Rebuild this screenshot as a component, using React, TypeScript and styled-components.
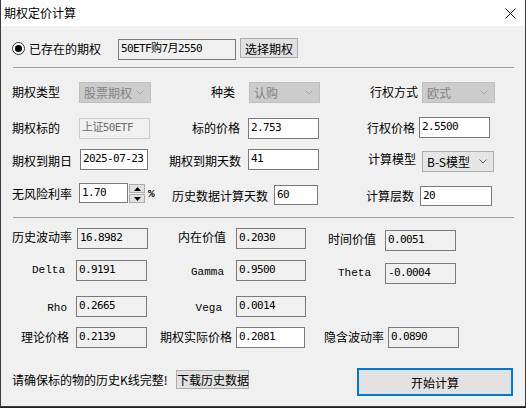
import React from 'react'
import styled, { createGlobalStyle } from 'styled-components'

const GlobalStyle = createGlobalStyle`
  html, body {
    margin: 0;
    padding: 0;
    background: #202020;
  }
  body {
    font-family: "Noto Sans CJK SC", "Noto Sans", sans-serif;
    font-size: 12px;
    color: #000;
  }
`

const Window = styled.div`
  width: 524px;
  height: 406px;
  background: #f0f0f0;
  border: 1px solid #3c3c3c;
  border-top: none;
  overflow: hidden;
`

const TitleBar = styled.div`
  height: 26px;
  background: #ffffff;
  display: flex;
  align-items: center;
  justify-content: space-between;
  padding: 0 9px 0 3px;
`

const Title = styled.span`
  font-size: 12px;
  line-height: 26px;
`

const Body = styled.div`
  padding-left: 11px;
`

const Row = styled.div<{ $mt: number; $h: number }>`
  display: flex;
  align-items: flex-start;
  margin-top: ${p => p.$mt}px;
  height: ${p => p.$h}px;
`

const Label = styled.span<{ $w: number; $right?: boolean; $pr?: number; $dy?: number; $h?: number; $latin?: boolean }>`
  width: ${p => p.$w}px;
  flex: none;
  box-sizing: border-box;
  text-align: ${p => (p.$right ? 'right' : 'left')};
  padding-right: ${p => p.$pr ?? 0}px;
  margin-top: ${p => p.$dy ?? 0}px;
  line-height: ${p => p.$h ?? 20}px;
  white-space: nowrap;
  font-family: ${p => (p.$latin ? '"Liberation Mono", monospace' : '"Noto Sans CJK SC", sans-serif')};
  font-size: ${p => (p.$latin ? '11px' : '12px')};
`

type BoxKind = 'white' | 'readonly' | 'disabled' | 'output'

const Box = styled.div<{ $w: number; $h?: number; $dy?: number; $kind: BoxKind }>`
  width: ${p => p.$w}px;
  height: ${p => p.$h ?? 21}px;
  margin-top: ${p => p.$dy ?? 0}px;
  flex: none;
  box-sizing: border-box;
  padding: 0 2px;
  display: flex;
  align-items: flex-start;
  padding-top: 2px;
  font-family: "DejaVu Sans Mono", "Noto Sans CJK SC", monospace;
  font-size: 11px;
  letter-spacing: -0.6px;
  line-height: 13px;
  white-space: nowrap;
  overflow: hidden;
  background: ${p => (p.$kind === 'white' ? '#ffffff' : '#f0f0f0')};
  border: 1px solid ${p => (p.$kind === 'disabled' ? '#cccccc' : '#7a7a7a')};
  color: ${p => (p.$kind === 'disabled' ? '#6d6d6d' : '#000')};
`

const Combo = styled.div<{ $w: number; $dy?: number; $disabled?: boolean }>`
  width: ${p => p.$w}px;
  height: 21px;
  margin-top: ${p => p.$dy ?? 0}px;
  flex: none;
  box-sizing: border-box;
  display: flex;
  align-items: center;
  justify-content: space-between;
  padding: 0 6px 0 4px;
  background: ${p => (p.$disabled ? '#cccccc' : '#e5e5e5')};
  border: 1px solid ${p => (p.$disabled ? '#bfbfbf' : '#adadad')};
  color: ${p => (p.$disabled ? '#838383' : '#000')};
  font-size: 12px;
  white-space: nowrap;
`

const Chevron = ({ color }: { color: string }) => (
  <svg width="8" height="5" viewBox="0 0 8 5">
    <polyline points="0.5,0.5 4,4 7.5,0.5" fill="none" stroke={color} strokeWidth="1" />
  </svg>
)

const Button = styled.button<{ $w: number; $h: number; $dy?: number; $ml?: number; $focus?: boolean }>`
  width: ${p => p.$w}px;
  height: ${p => p.$h}px;
  margin-top: ${p => p.$dy ?? 0}px;
  margin-left: ${p => p.$ml ?? 0}px;
  flex: none;
  box-sizing: border-box;
  padding: 0;
  background: #e1e1e1;
  border: ${p => (p.$focus ? '2px solid #0078d7' : '1px solid #adadad')};
  font-family: "Noto Sans CJK SC", sans-serif;
  font-size: 12px;
  color: #000;
  white-space: nowrap;
`

const Separator = styled.div<{ $mt: number }>`
  margin-top: ${p => p.$mt}px;
  width: 501px;
  height: 1px;
  margin-left: 1px;
  background: #a0a0a0;
`

const RadioGroup = styled.label`
  width: 106px;
  flex: none;
  display: flex;
  align-items: center;
  height: 21px;
  gap: 4px;
  font-size: 12px;
`

const RadioDot = styled.span`
  width: 11px;
  height: 11px;
  border-radius: 50%;
  border: 1px solid #333;
  background: #fff;
  display: flex;
  align-items: center;
  justify-content: center;
  &::after {
    content: '';
    width: 7px;
    height: 7px;
    border-radius: 50%;
    background: #000;
  }
`

const Spinner = styled.div`
  width: 16px;
  flex: none;
  margin-top: 1px;
  margin-left: 1px;
  display: flex;
  flex-direction: column;
  gap: 1px;
`

const SpinBtn = styled.div`
  height: 9px;
  box-sizing: border-box;
  background: #e1e1e1;
  border: 1px solid #adadad;
  display: flex;
  align-items: center;
  justify-content: center;
`

const Tri = ({ up }: { up?: boolean }) => (
  <svg width="7" height="4" viewBox="0 0 7 4">
    <polygon points={up ? '0,4 7,4 3.5,0' : '0,0 7,0 3.5,4'} fill="#000" />
  </svg>
)

const Percent = styled.span`
  width: 10px;
  margin-left: 3px;
  flex: none;
  line-height: 22px;
  font-family: "Liberation Mono", monospace;
  font-size: 11px;
  font-weight: bold;
`

export default function App() {
  return (
    <>
      <GlobalStyle />
      <Window>
        <TitleBar>
          <Title>期权定价计算</Title>
          <svg width="11" height="11" viewBox="0 0 11 11">
            <path d="M0.5 0.5 L10.5 10.5 M10.5 0.5 L0.5 10.5" stroke="#000" strokeWidth="1" />
          </svg>
        </TitleBar>
        <Body>
          <Row $mt={12} $h={21}>
            <RadioGroup>
              <RadioDot />
              已存在的期权
            </RadioGroup>
            <Box $w={118} $kind="readonly" $dy={1}>50ETF购7月2550</Box>
            <Button $w={58} $h={20} $ml={4}>选择期权</Button>
          </Row>
          <Separator $mt={8} />

          <Row $mt={14} $h={21}>
            <Label $w={67}>期权类型</Label>
            <Combo $w={72} $disabled>股票期权<Chevron color="#a6a6a6" /></Combo>
            <Label $w={98} $right $pr={14}>种类</Label>
            <Combo $w={71} $disabled>认购<Chevron color="#a6a6a6" /></Combo>
            <Label $w={102} $right $pr={4}>行权方式</Label>
            <Combo $w={73} $disabled>欧式<Chevron color="#a6a6a6" /></Combo>
          </Row>

          <Row $mt={15} $h={21}>
            <Label $w={67}>期权标的</Label>
            <Box $w={71} $kind="disabled">上证50ETF</Box>
            <Label $w={98} $right $pr={8}>标的价格</Label>
            <Box $w={71} $kind="white">2.753</Box>
            <Label $w={100} $right $pr={4}>行权价格</Label>
            <Box $w={71} $kind="white" $dy={-1}>2.5500</Box>
          </Row>

          <Row $mt={10} $h={21}>
            <Label $w={68} $dy={2}>期权到期日</Label>
            <Box $w={68} $kind="white">2025-07-23</Box>
            <Label $w={100} $right $pr={7} $dy={2}>期权到期天数</Label>
            <Box $w={71} $kind="white">41</Box>
            <Label $w={103} $right $pr={6}>计算模型</Label>
            <Combo $w={72} $dy={2}>B-S模型<Chevron color="#555" /></Combo>
          </Row>

          <Row $mt={13} $h={23}>
            <Label $w={67} $dy={1}>无风险利率</Label>
            <Box $w={49} $kind="white" $h={20}>1.70</Box>
            <Spinner>
              <SpinBtn><Tri up /></SpinBtn>
              <SpinBtn><Tri /></SpinBtn>
            </Spinner>
            <Percent>%</Percent>
            <Label $w={116} $right $pr={6} $dy={3}>历史数据计算天数</Label>
            <Box $w={44} $kind="white" $h={20} $dy={2}>60</Box>
            <Label $w={102} $right $pr={6} $dy={3}>计算层数</Label>
            <Box $w={72} $kind="white" $h={20} $dy={3}>20</Box>
          </Row>
          <Separator $mt={11} />

          <Row $mt={10} $h={22}>
            <Label $w={65} $dy={-1}>历史波动率</Label>
            <Box $w={71} $kind="output">16.8982</Box>
            <Label $w={88} $right $pr={10} $dy={-1}>内在价值</Label>
            <Box $w={70} $kind="output">0.2030</Box>
            <Label $w={79} $right $pr={9} $dy={1}>时间价值</Label>
            <Box $w={71} $kind="output" $dy={2}>0.0051</Box>
          </Row>

          <Row $mt={10} $h={23}>
            <Label $w={64} $right $pr={11} $latin>Delta</Label>
            <Box $w={71} $kind="output">0.9191</Box>
            <Label $w={89} $right $pr={12} $dy={2} $latin>Gamma</Label>
            <Box $w={70} $kind="output">0.9500</Box>
            <Label $w={79} $right $pr={14} $dy={3} $latin>Theta</Label>
            <Box $w={71} $kind="output" $dy={3}>-0.0004</Box>
          </Row>

          <Row $mt={13} $h={20}>
            <Label $w={64} $right $pr={9} $dy={2} $latin>Rho</Label>
            <Box $w={71} $kind="output">0.2665</Box>
            <Label $w={89} $right $pr={14} $dy={2} $latin>Vega</Label>
            <Box $w={70} $kind="output">0.0014</Box>
          </Row>

          <Row $mt={11} $h={21}>
            <Label $w={64} $right $pr={7}>理论价格</Label>
            <Box $w={71} $kind="output">0.2139</Box>
            <Label $w={89} $right $pr={4}>期权实际价格</Label>
            <Box $w={69} $kind="white">0.2081</Box>
            <Label $w={83} $right $pr={4}>隐含波动率</Label>
            <Box $w={71} $kind="output">0.0890</Box>
          </Row>

          <Row $mt={20} $h={28}>
            <Label $w={164} $dy={2} $h={20}>请确保标的物的历史K线完整!</Label>
            <Button $w={73} $h={19} $dy={2}>下载历史数据</Button>
            <Button $w={156} $h={28} $ml={108} $focus>开始计算</Button>
          </Row>
        </Body>
      </Window>
    </>
  )
}
